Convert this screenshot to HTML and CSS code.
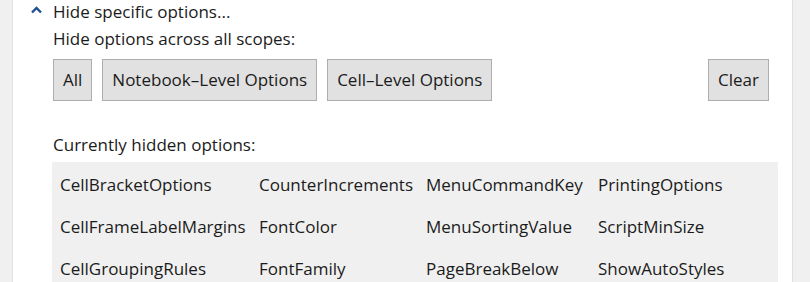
FILE: index.html
```html
<!DOCTYPE html>
<html>
<head>
<meta charset="utf-8">
<link rel="stylesheet" href="styles.css">
</head>
<body>
<div class="frame">
  <div class="side-left"></div>
  <div class="panel">
    <div class="header">
      <svg class="chev" width="11" height="8" viewBox="0 0 11 8"><path d="M1 6.5 L5.5 2 L10 6.5" fill="none" stroke="#1f4e96" stroke-width="2.4"/></svg>
      <span>Hide specific options...</span>
    </div>
    <div class="label1">Hide options across all scopes:</div>
    <div class="buttons">
      <div class="btn btn-all">All</div>
      <div class="btn btn-nb">Notebook–Level Options</div>
      <div class="btn btn-cell">Cell–Level Options</div>
      <div class="spacer"></div>
      <div class="btn btn-clear">Clear</div>
    </div>
    <div class="label2">Currently hidden options:</div>
    <div class="table">
      <div>CellBracketOptions</div><div>CounterIncrements</div><div>MenuCommandKey</div><div>PrintingOptions</div>
      <div>CellFrameLabelMargins</div><div>FontColor</div><div>MenuSortingValue</div><div>ScriptMinSize</div>
      <div>CellGroupingRules</div><div>FontFamily</div><div>PageBreakBelow</div><div>ShowAutoStyles</div>
    </div>
  </div>
  <div class="side-right"></div>
</div>
</body>
</html>
```
FILE: styles.css
```css
html, body {
  margin: 0;
  padding: 0;
  background: #ffffff;
  overflow: hidden;
}
body {
  font-family: "Open Sans", "Noto Sans", sans-serif;
  font-size: 17px;
  color: #1b1b1b;
}
.frame {
  display: flex;
  width: 810px;
  height: 282px;
}
.side-left {
  width: 12px;
  background: #f0f0f0;
  border-right: 1px solid #e2e2e2;
  flex: none;
}
.side-right {
  width: 17px;
  background: #f0f0f0;
  border-left: 1px solid #e0e0e0;
  flex: none;
}
.panel {
  flex: 1;
  min-width: 0;
  padding-left: 18px;
  padding-right: 14px;
  display: flex;
  flex-direction: column;
}
.header {
  display: flex;
  align-items: center;
  height: 30px;
}
.chev {
  margin-right: 11px;
  margin-top: -3px;
}
.label1 {
  margin-left: 22px;
  height: 32px;
  line-height: 32px;
}
.buttons {
  display: flex;
  margin-left: 22px;
  margin-top: 4px;
  gap: 10px;
}
.btn {
  height: 40px;
  line-height: 40px;
  background: #e1e1e1;
  border: 1px solid #adadad;
  padding: 0 9px;
  white-space: nowrap;
}
.spacer { flex: 1; }
.btn-clear { margin-right: 9px; }
.label2 {
  margin-left: 22px;
  margin-top: 30px;
  height: 28px;
  line-height: 28px;
}
.table {
  margin-left: 21px;
  margin-top: 3px;
  background: #f0f0f0;
  display: grid;
  grid-template-columns: 199px 167px 172px 1fr;
  grid-auto-rows: 42px;
  padding: 1px 0 0 8px;
  align-items: center;
}
.table div { white-space: nowrap; }
```
